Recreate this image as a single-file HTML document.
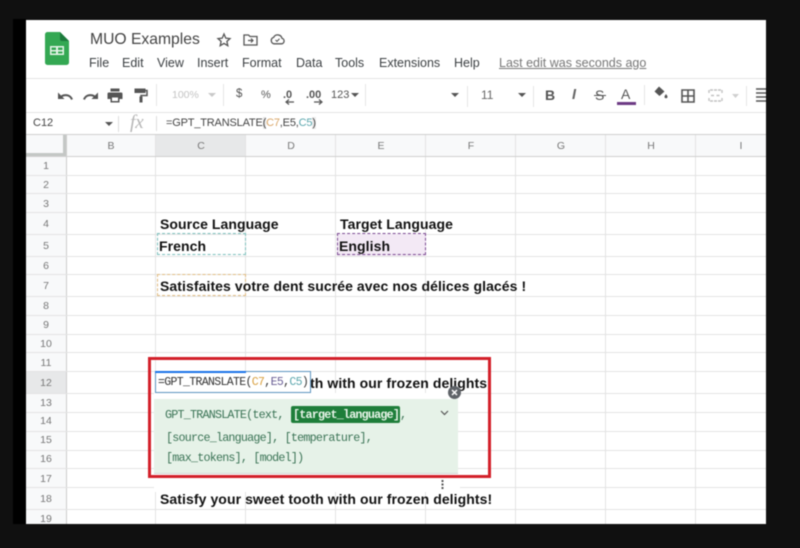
<!DOCTYPE html>
<html><head><meta charset="utf-8"><style>
html,body{margin:0;padding:0;width:800px;height:548px;overflow:hidden;background:#101010}
*{box-sizing:border-box}
#s{position:absolute;left:26px;top:20px;width:740px;height:504px;background:#fff;overflow:hidden}
#left{position:absolute;left:13px;top:19px;width:13px;height:505px;background:#000}
#r{position:absolute;left:0;top:0;width:800px;height:548px;filter:blur(.45px)}
.t{position:absolute;white-space:nowrap;font-family:"Liberation Sans",sans-serif;color:#3c4043}
.l{position:absolute;background:#e3e3e3}
.h{position:absolute;font:10.5px "Liberation Sans",sans-serif;color:#777;text-align:center;white-space:nowrap}
.b{position:absolute;white-space:nowrap;font:bold 14px "Liberation Sans",sans-serif;color:#111;letter-spacing:.08px}
.m{position:absolute;white-space:nowrap;font:11.7px "Liberation Mono",monospace;color:#3a7355;letter-spacing:-.77px}
svg{position:absolute;overflow:visible}
</style></head><body>
<div id="r">
<div id="left"></div>
<div id="s"></div>

<!-- logo -->
<svg style="left:45px;top:32px" width="24" height="33" viewBox="0 0 24 33">
<path d="M2.5 0H15L24 9V30.5a2.500 2.500 0 0 1-2.500 2.500H2.500A2.500 2.500 0 0 1 0 30.500V2.500A2.500 2.500 0 0 1 2.500 0Z" fill="#34a853"/>
<path d="M15 0L24 9H17a2 2 0 0 1-2-2Z" fill="#1c7a3c"/>
<path d="M5 14H19V23H5ZM6.500 15.500V18H11V15.500ZM13 15.500V18H17.500V15.500ZM6.500 19.500V21.500H11V19.500ZM13 19.500V21.500H17.500V19.500Z" fill="#e4f3e7" fill-rule="evenodd"/>
</svg>
<div class="t" style="left:90px;top:31px;font-size:15.700px;color:#444">MUO Examples</div>
<svg style="left:216px;top:32px" width="16" height="16" viewBox="0 0 16 16"><path d="M8 2L9.800 6.200 14 6.600 10.900 9.400 11.800 13.700 8 11.400 4.200 13.700 5.100 9.400 2 6.600 6.200 6.200Z" fill="none" stroke="#555" stroke-width="1.300"/></svg>
<svg style="left:243px;top:33px" width="15" height="13" viewBox="0 0 15 13"><path d="M1 2H5.500L7 3.500H14V12H1Z" fill="none" stroke="#555" stroke-width="1.300"/><path d="M5 7.500H9.500M8 5.500L10 7.500 8 9.500" fill="none" stroke="#555" stroke-width="1.200"/></svg>
<svg style="left:270px;top:33px" width="15" height="12" viewBox="0 0 15 12"><path d="M4 10.800H11.500A2.800 2.800 0 0 0 12 5.300 4.500 4.500 0 0 0 3.600 4.400 3.300 3.300 0 0 0 4 10.800Z" fill="none" stroke="#555" stroke-width="1.300"/><path d="M5.500 7L7 8.400 9.500 5.800" fill="none" stroke="#555" stroke-width="1.100"/></svg>

<div class="t" style="left:89px;top:56px;font-size:12.500px">File</div>
<div class="t" style="left:122px;top:56px;font-size:12.500px">Edit</div>
<div class="t" style="left:157px;top:56px;font-size:12.500px">View</div>
<div class="t" style="left:197px;top:56px;font-size:12.500px">Insert</div>
<div class="t" style="left:242px;top:56px;font-size:12.500px">Format</div>
<div class="t" style="left:296px;top:56px;font-size:12.500px">Data</div>
<div class="t" style="left:335px;top:56px;font-size:12.500px">Tools</div>
<div class="t" style="left:379px;top:56px;font-size:12.500px">Extensions</div>
<div class="t" style="left:454px;top:56px;font-size:12.500px">Help</div>
<div class="t" style="left:499px;top:56px;font-size:12.500px;color:#777;text-decoration:underline">Last edit was seconds ago</div>

<div class="l" style="left:26px;top:78px;width:740px;height:1px;background:#e4e4e4"></div>
<div class="l" style="left:26px;top:112px;width:740px;height:1px;background:#e4e4e4"></div>
<div class="l" style="left:26px;top:134px;width:740px;height:1px;background:#cfcfcf"></div>

<!-- toolbar icons -->
<svg style="left:57px;top:90px" width="16" height="12" viewBox="0 0 16 12"><path d="M15 9.500C13.500 5.500 9 3.800 4.500 6.200" fill="none" stroke="#555" stroke-width="2"/><path d="M1 2.500V9H7.500Z" fill="#555"/></svg>
<svg style="left:83px;top:90px" width="16" height="12" viewBox="0 0 16 12"><path d="M1 9.500C2.500 5.500 7 3.800 11.500 6.200" fill="none" stroke="#555" stroke-width="2"/><path d="M15 2.500V9H8.500Z" fill="#555"/></svg>
<svg style="left:107px;top:88px" width="16" height="15" viewBox="0 0 16 15"><path d="M3.500 0.500H12.500V3.500H3.500ZM1.500 4.500H14.500A1.200 1.200 0 0 1 15.500 5.700V11H12.500V14.500H3.500V11H.5V5.700A1.200 1.200 0 0 1 1.500 4.500ZM5 9.500V13H11V9.500Z" fill="#555" fill-rule="evenodd"/></svg>
<svg style="left:134px;top:88px" width="14" height="15" viewBox="0 0 14 15"><path d="M.5.500H11.500V5H.5Z" fill="#555"/><path d="M11.500 2.500H13V7.500H7V9" fill="none" stroke="#555" stroke-width="1.500"/><path d="M5.500 8.500H8.500V14.500H5.500Z" fill="#555"/></svg>
<div class="l" style="left:156px;top:84px;width:1px;height:22px;background:#e6e6e6"></div>
<div class="t" style="left:172px;top:89px;font-size:10.500px;color:#c4c4c4">100%</div>
<svg style="left:208px;top:93px" width="8" height="4"><path d="M0 0H8L4 4Z" fill="#c9c9c9"/></svg>
<div class="l" style="left:223px;top:84px;width:1px;height:22px;background:#e6e6e6"></div>
<div class="t" style="left:236px;top:88px;font-size:11.500px;color:#555">$</div>
<div class="t" style="left:261px;top:89px;font-size:11px;color:#555">%</div>
<div class="t" style="left:283px;top:89px;font-size:11px;color:#555;font-weight:bold">.0</div>
<svg style="left:285px;top:99px" width="9" height="6"><path d="M9 3H2M4 .5L1 3 4 5.500" fill="none" stroke="#555" stroke-width="1.200"/></svg>
<div class="t" style="left:306px;top:89px;font-size:11px;color:#555;font-weight:bold">.00</div>
<svg style="left:314px;top:99px" width="9" height="6"><path d="M0 3H7M5 .5L8 3 5 5.500" fill="none" stroke="#555" stroke-width="1.200"/></svg>
<div class="t" style="left:331px;top:89px;font-size:11px;color:#555">123</div>
<svg style="left:351px;top:93px" width="8" height="4"><path d="M0 0H8L4 4Z" fill="#555"/></svg>
<div class="l" style="left:365px;top:84px;width:1px;height:22px;background:#e6e6e6"></div>
<svg style="left:451px;top:93px" width="8" height="4"><path d="M0 0H8L4 4Z" fill="#555"/></svg>
<div class="l" style="left:467px;top:86px;width:1px;height:21px;background:#e6e6e6"></div>
<div class="t" style="left:481px;top:88px;font-size:12px;color:#666">11</div>
<svg style="left:518px;top:93px" width="8" height="4"><path d="M0 0H8L4 4Z" fill="#555"/></svg>
<div class="l" style="left:533px;top:86px;width:1px;height:21px;background:#e6e6e6"></div>
<div class="t" style="left:545px;top:87px;font-size:14px;font-weight:bold;color:#555">B</div>
<div class="t" style="left:572px;top:87px;font-size:14.500px;font-weight:bold;font-style:italic;color:#666">I</div>
<div class="t" style="left:595px;top:87px;font-size:14px;color:#555">S</div>
<div class="l" style="left:594px;top:95px;width:12px;height:1px;background:#555"></div>
<div class="t" style="left:621px;top:86px;font-size:14px;color:#555">A</div>
<div class="l" style="left:617px;top:102px;width:19px;height:3px;background:#6d3b85"></div>
<div class="l" style="left:644px;top:85px;width:1px;height:20px;background:#e6e6e6"></div>
<svg style="left:654px;top:86px" width="14" height="13" viewBox="0 0 14 13"><path d="M5 .5L10.500 5.500 5.500 10 .5 5.500Z" fill="#555"/><path d="M12 8C13 9.500 13.500 10 13.500 10.800A1.500 1.500 0 0 1 10.500 10.800C10.500 10 11 9.500 12 8Z" fill="#555"/></svg>
<svg style="left:681px;top:89px" width="14" height="14" viewBox="0 0 14 14"><path d="M1 1H13V13H1ZM7 1V13M1 7H13" fill="none" stroke="#555" stroke-width="1.600"/></svg>
<svg style="left:708px;top:89px" width="15" height="13" viewBox="0 0 15 13"><path d="M1 4V1H14V4M1 9V12H14V9M3 6.500H6.500M8.500 6.500H12" fill="none" stroke="#c2c2c2" stroke-width="1.400" stroke-dasharray="3 1"/></svg>
<svg style="left:732px;top:94px" width="7" height="4"><path d="M0 0H7L3.500 4Z" fill="#d0d0d0"/></svg>
<div class="l" style="left:746px;top:86px;width:1px;height:20px;background:#e6e6e6"></div>
<svg style="left:756px;top:88px" width="10" height="14" viewBox="0 0 10 14"><path d="M0 1H10M0 5H10M0 9H10M0 13H10" stroke="#555" stroke-width="1.500"/></svg>

<!-- formula bar -->
<div class="t" style="left:33px;top:117px;font-size:11px;color:#444">C12</div>
<svg style="left:105px;top:122px" width="8" height="4"><path d="M0 0H8L4 4Z" fill="#555"/></svg>
<div class="l" style="left:118px;top:116px;width:1px;height:16px;background:#ddd"></div>
<div class="t" style="left:130px;top:112px;font:italic 19px 'Liberation Serif',serif;color:#b5b5b5">fx</div>
<div class="l" style="left:156px;top:116px;width:1px;height:15px;background:#ddd"></div>
<div class="t" style="left:166px;top:117px;font-size:11px;color:#444;letter-spacing:-.18px">=GPT_TRANSLATE<span style="background:#e6e6e6">(</span><span style="color:#d9a566">C7</span>,E5,<span style="color:#5aa6ad">C5</span><span style="background:#ececec">)</span></div>

<!-- column header -->
<div class="l" style="left:26px;top:135px;width:740px;height:21px;background:#f8f9fa"></div>
<div class="l" style="left:156px;top:135px;width:90px;height:21px;background:#e7e8e9"></div>
<div class="l" style="left:26px;top:156px;width:40px;height:368px;background:#f8f9fa"></div>
<div class="l" style="left:26px;top:372px;width:40px;height:21px;background:#e7e8e9"></div>
<div class="l" style="left:26px;top:153px;width:39px;height:3px;background:#c4c7c5"></div>
<div class="l" style="left:63px;top:135px;width:3px;height:21px;background:#c4c7c5"></div>

<div class="h" style="left:66px;top:140px;width:90px">B</div>
<div class="h" style="left:156px;top:140px;width:90px">C</div>
<div class="h" style="left:246px;top:140px;width:90px">D</div>
<div class="h" style="left:336px;top:140px;width:90px">E</div>
<div class="h" style="left:426px;top:140px;width:90px">F</div>
<div class="h" style="left:516px;top:140px;width:90px">G</div>
<div class="h" style="left:606px;top:140px;width:90px">H</div>
<div class="h" style="left:696px;top:140px;width:90px">I</div>

<!-- column lines -->
<div class="l" style="left:66px;top:135px;width:1px;height:389px;background:#cdcdcd"></div>
<div class="l" style="left:155px;top:135px;width:1px;height:389px"></div>
<div class="l" style="left:245px;top:135px;width:1px;height:389px"></div>
<div class="l" style="left:335px;top:135px;width:1px;height:389px"></div>
<div class="l" style="left:425px;top:135px;width:1px;height:389px"></div>
<div class="l" style="left:515px;top:135px;width:1px;height:389px"></div>
<div class="l" style="left:605px;top:135px;width:1px;height:389px"></div>
<div class="l" style="left:695px;top:135px;width:1px;height:389px"></div>

<!-- row lines -->
<div class="l" style="left:26px;top:156px;width:740px;height:1px;background:#cfcfcf"></div>
<div class="l" style="left:26px;top:175px;width:740px;height:1px"></div>
<div class="l" style="left:26px;top:193px;width:740px;height:1px"></div>
<div class="l" style="left:26px;top:212px;width:740px;height:1px"></div>
<div class="l" style="left:26px;top:234px;width:740px;height:1px"></div>
<div class="l" style="left:26px;top:256px;width:740px;height:1px"></div>
<div class="l" style="left:26px;top:274px;width:740px;height:1px"></div>
<div class="l" style="left:26px;top:296px;width:740px;height:1px"></div>
<div class="l" style="left:26px;top:315px;width:740px;height:1px"></div>
<div class="l" style="left:26px;top:334px;width:740px;height:1px"></div>
<div class="l" style="left:26px;top:352px;width:740px;height:1px"></div>
<div class="l" style="left:26px;top:371px;width:740px;height:1px"></div>
<div class="l" style="left:26px;top:393px;width:740px;height:1px"></div>
<div class="l" style="left:26px;top:412px;width:740px;height:1px"></div>
<div class="l" style="left:26px;top:431px;width:740px;height:1px"></div>
<div class="l" style="left:26px;top:450px;width:740px;height:1px"></div>
<div class="l" style="left:26px;top:468px;width:740px;height:1px"></div>
<div class="l" style="left:26px;top:487px;width:740px;height:1px"></div>
<div class="l" style="left:26px;top:509px;width:740px;height:1px"></div>

<!-- row labels -->
<div class="h" style="left:26px;top:160px;width:40px">1</div>
<div class="h" style="left:26px;top:179px;width:40px">2</div>
<div class="h" style="left:26px;top:198px;width:40px">3</div>
<div class="h" style="left:26px;top:218px;width:40px">4</div>
<div class="h" style="left:26px;top:240px;width:40px">5</div>
<div class="h" style="left:26px;top:260px;width:40px">6</div>
<div class="h" style="left:26px;top:280px;width:40px">7</div>
<div class="h" style="left:26px;top:300px;width:40px">8</div>
<div class="h" style="left:26px;top:319px;width:40px">9</div>
<div class="h" style="left:26px;top:338px;width:40px">10</div>
<div class="h" style="left:26px;top:357px;width:40px">11</div>
<div class="h" style="left:26px;top:377px;width:40px">12</div>
<div class="h" style="left:26px;top:397px;width:40px">13</div>
<div class="h" style="left:26px;top:415px;width:40px">14</div>
<div class="h" style="left:26px;top:434px;width:40px">15</div>
<div class="h" style="left:26px;top:453px;width:40px">16</div>
<div class="h" style="left:26px;top:473px;width:40px">17</div>
<div class="h" style="left:26px;top:493px;width:40px">18</div>
<div class="h" style="left:26px;top:513px;width:40px">19</div>

<!-- cells -->
<div class="b" style="left:160px;top:216px">Source Language</div>
<div class="b" style="left:340px;top:216px">Target Language</div>
<div class="l" style="left:337px;top:234px;width:89px;height:22px;background:#f3e9f5"></div>
<div style="position:absolute;left:157px;top:233px;width:89px;height:22px;border:1px dashed #7cc0bd"></div>
<div style="position:absolute;left:337px;top:233px;width:89px;height:22px;border:1px dashed #7b4a92"></div>
<div style="position:absolute;left:157px;top:274px;width:89px;height:22px;border:1px dashed #e0bb80"></div>
<div class="b" style="left:159px;top:238px">French</div>
<div class="b" style="left:339px;top:238px">English</div>
<div class="b" style="left:160px;top:278px">Satisfaites votre dent sucrée avec nos délices glacés !</div>
<div class="b" style="left:310px;top:375px">th with our frozen delights!</div>
<div class="l" style="left:154px;top:393px;width:306px;height:6px;background:#fff"></div>
<div class="l" style="left:154px;top:470px;width:306px;height:22px;background:#fff"></div>
<div class="b" style="left:160px;top:491px">Satisfy your sweet tooth with our frozen delights!</div>

<!-- edit box -->
<div style="position:absolute;left:155px;top:371px;width:156px;height:22px;background:#fff;border:1px solid #5d94bf"></div>
<div class="l" style="left:155px;top:371px;width:91px;height:2px;background:#1a73e8"></div>
<div class="t" style="left:158px;top:376px;font-size:11.500px;color:#333;font-family:'Liberation Mono',monospace;letter-spacing:-.65px;">=GPT_TRANSLATE(<span style="color:#d9a03f">C7</span>,<span style="color:#6a5f95">E5</span>,<span style="color:#5aa6ad">C5</span>)</div>

<!-- tooltip -->
<div style="position:absolute;left:154px;top:399px;width:304px;height:75px;background:#e6f2e8;border-bottom:1px solid #d5d5d5"></div>
<div class="m" style="left:165px;top:408px">GPT_TRANSLATE(text,</div>
<div style="position:absolute;left:291px;top:406px;width:109px;height:17px;background:#1e7e3a;border-radius:2px"></div>
<div class="m" style="left:293px;top:408px;color:#e9f5ea;font-weight:bold">[target_language]</div>
<div class="m" style="left:400px;top:408px">,</div>
<div class="m" style="left:166px;top:431px">[source_language], [temperature],</div>
<div class="m" style="left:166px;top:451px">[max_tokens], [model])</div>
<svg style="left:440px;top:410px" width="9" height="6"><path d="M1 1L4.500 4.500 8 1" fill="none" stroke="#555" stroke-width="1.200"/></svg>
<div style="position:absolute;left:448px;top:386px;width:13px;height:13px;border-radius:50%;background:#5f6368"></div>
<svg style="left:451px;top:389px" width="7" height="7"><path d="M1 1L6 6M6 1L1 6" stroke="#fff" stroke-width="1.500"/></svg>
<svg style="left:441px;top:480px" width="3" height="9"><path d="M1.500 0v2M1.500 3.500v2M1.500 7v2" stroke="#555" stroke-width="2"/></svg>

<!-- red box -->
<div style="position:absolute;left:148px;top:357px;width:343px;height:121px;border:3px solid #d3202a"></div>
</div>
</body></html>
